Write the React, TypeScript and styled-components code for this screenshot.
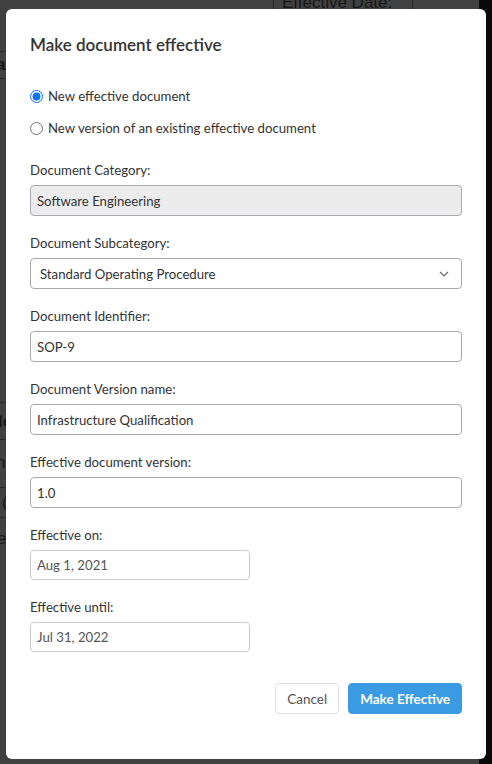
import React from "react";
import styled, { createGlobalStyle } from "styled-components";

const Global = createGlobalStyle`
  html, body { margin: 0; padding: 0; }
  body { font-family: Lato, "Open Sans", sans-serif; background: #404040; }
  * { box-sizing: border-box; }
`;

const Page = styled.div`
  position: relative;
  width: 492px;
  height: 764px;
  overflow: hidden;
  background: #414141;
`;

const Backdrop = styled.div`
  position: absolute;
  inset: 0;
  color: #151515;
  font-size: 16px;
`;

const HLine = styled.div<{ $top: number; $left: number; $width: number }>`
  position: absolute;
  top: ${(p) => p.$top}px;
  left: ${(p) => p.$left}px;
  width: ${(p) => p.$width}px;
  height: 1px;
  background: #262626;
`;

const VLine = styled.div<{ $left: number; $height: number }>`
  position: absolute;
  top: 0;
  left: ${(p) => p.$left}px;
  width: 1px;
  height: ${(p) => p.$height}px;
  background: #262626;
`;

const BgText = styled.span<{ $top: number; $left: number; $bold?: boolean }>`
  position: absolute;
  top: ${(p) => p.$top}px;
  left: ${(p) => p.$left}px;
  font-family: "Liberation Sans", Arial, sans-serif;
  font-size: 17px;
  font-weight: ${(p) => (p.$bold ? 700 : 400)};
  color: #161616;
  line-height: 1;
  white-space: nowrap;
`;

const Scrollbar = styled.div`
  position: absolute;
  top: 0;
  right: 0;
  width: 13px;
  height: 100%;
  background: #0a0a0a;
`;

const Modal = styled.div`
  position: absolute;
  top: 9px;
  left: 6px;
  width: 480px;
  height: 750px;
  background: #fff;
  border-radius: 6px;
  padding: 26px 24px 0 24px;
  color: #333;
  font-size: 13.2px;
  display: flex;
  flex-direction: column;
`;

const Title = styled.h4`
  margin: 0;
  font-size: 17px;
  font-weight: 600;
  line-height: 20px;
  color: #333;
`;

const RadioGroup = styled.div`
  margin-top: 31px;
  display: flex;
  flex-direction: column;
  gap: 12px;
`;

const RadioLabel = styled.label`
  display: flex;
  align-items: center;
  gap: 5px;
  height: 20px;
  line-height: 20px;
  color: #333;
`;

const RadioInput = styled.input`
  margin: 0;
  width: 13px;
  height: 13px;
  accent-color: #0a74ff;
`;

const Fields = styled.div`
  margin-top: 22px;
  display: flex;
  flex-direction: column;
  gap: 17px;
`;

const Field = styled.div`
  display: flex;
  flex-direction: column;
  gap: 5px;
`;

const Label = styled.div`
  line-height: 20px;
  color: #333;
`;

const Input = styled.div<{ $disabled?: boolean; $short?: boolean }>`
  height: ${(p) => (p.$short ? 30 : 31)}px;
  width: ${(p) => (p.$short ? "220px" : "100%")};
  border: 1px solid ${(p) => (p.$short ? "#ccc" : "#a9a9b0")};
  border-radius: 4px;
  background: ${(p) => (p.$disabled ? "#ececec" : "#fff")};
  padding: 0 6px;
  display: flex;
  align-items: center;
  color: ${(p) => (p.$short ? "#555" : "#333")};
`;

const Select = styled.div`
  height: 31px;
  width: 100%;
  border: 1px solid #a9a9b0;
  border-radius: 4px;
  background: #fff;
  padding: 0 12px 0 9px;
  display: flex;
  align-items: center;
  justify-content: space-between;
  color: #333;
`;

const Footer = styled.div`
  margin-top: 31px;
  display: flex;
  justify-content: flex-end;
  gap: 9px;
`;

const Button = styled.button<{ $primary?: boolean }>`
  height: 31px;
  padding: 0 ${(p) => (p.$primary ? 11 : 11)}px;
  border-radius: 4px;
  font-family: inherit;
  font-size: 13.5px;
  font-weight: ${(p) => (p.$primary ? 700 : 400)};
  border: 1px solid ${(p) => (p.$primary ? "#3a9be3" : "#e0e0e0")};
  background: ${(p) => (p.$primary ? "#3a9be3" : "#fff")};
  color: ${(p) => (p.$primary ? "#fff" : "#555")};
`;

const Chevron = () => (
  <svg width="10" height="6" viewBox="0 0 10 6" fill="none">
    <path d="M1 1l4 4 4-4" stroke="#666" strokeWidth="1.2" />
  </svg>
);

export default function App() {
  return (
    <>
      <Global />
      <Page>
        <Backdrop>
          <VLine $left={273} $height={9} />
          <VLine $left={412} $height={9} />
          <BgText $top={-6} $left={282}>Effective Date:</BgText>
          <HLine $top={51} $left={0} $width={6} />
          <HLine $top={78} $left={0} $width={6} />
          <BgText $top={56} $left={-4} $bold>a</BgText>
          <HLine $top={402} $left={0} $width={6} />
          <HLine $top={439} $left={0} $width={6} />
          <HLine $top={487} $left={0} $width={6} />
          <HLine $top={517} $left={0} $width={6} />
          <BgText $top={413} $left={-2} $bold>le</BgText>
          <BgText $top={454} $left={-4}>nc</BgText>
          <BgText $top={494} $left={2}>(</BgText>
          <BgText $top={530} $left={-3}>e</BgText>
          <Scrollbar />
        </Backdrop>
        <Modal>
          <Title>Make document effective</Title>
          <RadioGroup>
            <RadioLabel>
              <RadioInput type="radio" name="kind" defaultChecked />
              New effective document
            </RadioLabel>
            <RadioLabel>
              <RadioInput type="radio" name="kind" />
              New version of an existing effective document
            </RadioLabel>
          </RadioGroup>
          <Fields>
            <Field>
              <Label>Document Category:</Label>
              <Input $disabled>Software Engineering</Input>
            </Field>
            <Field>
              <Label>Document Subcategory:</Label>
              <Select>
                <span>Standard Operating Procedure</span>
                <Chevron />
              </Select>
            </Field>
            <Field>
              <Label>Document Identifier:</Label>
              <Input>SOP-9</Input>
            </Field>
            <Field>
              <Label>Document Version name:</Label>
              <Input>Infrastructure Qualification</Input>
            </Field>
            <Field>
              <Label>Effective document version:</Label>
              <Input>1.0</Input>
            </Field>
            <Field>
              <Label>Effective on:</Label>
              <Input $short>Aug 1, 2021</Input>
            </Field>
            <Field>
              <Label>Effective until:</Label>
              <Input $short>Jul 31, 2022</Input>
            </Field>
          </Fields>
          <Footer>
            <Button>Cancel</Button>
            <Button $primary>Make Effective</Button>
          </Footer>
        </Modal>
      </Page>
    </>
  );
}
